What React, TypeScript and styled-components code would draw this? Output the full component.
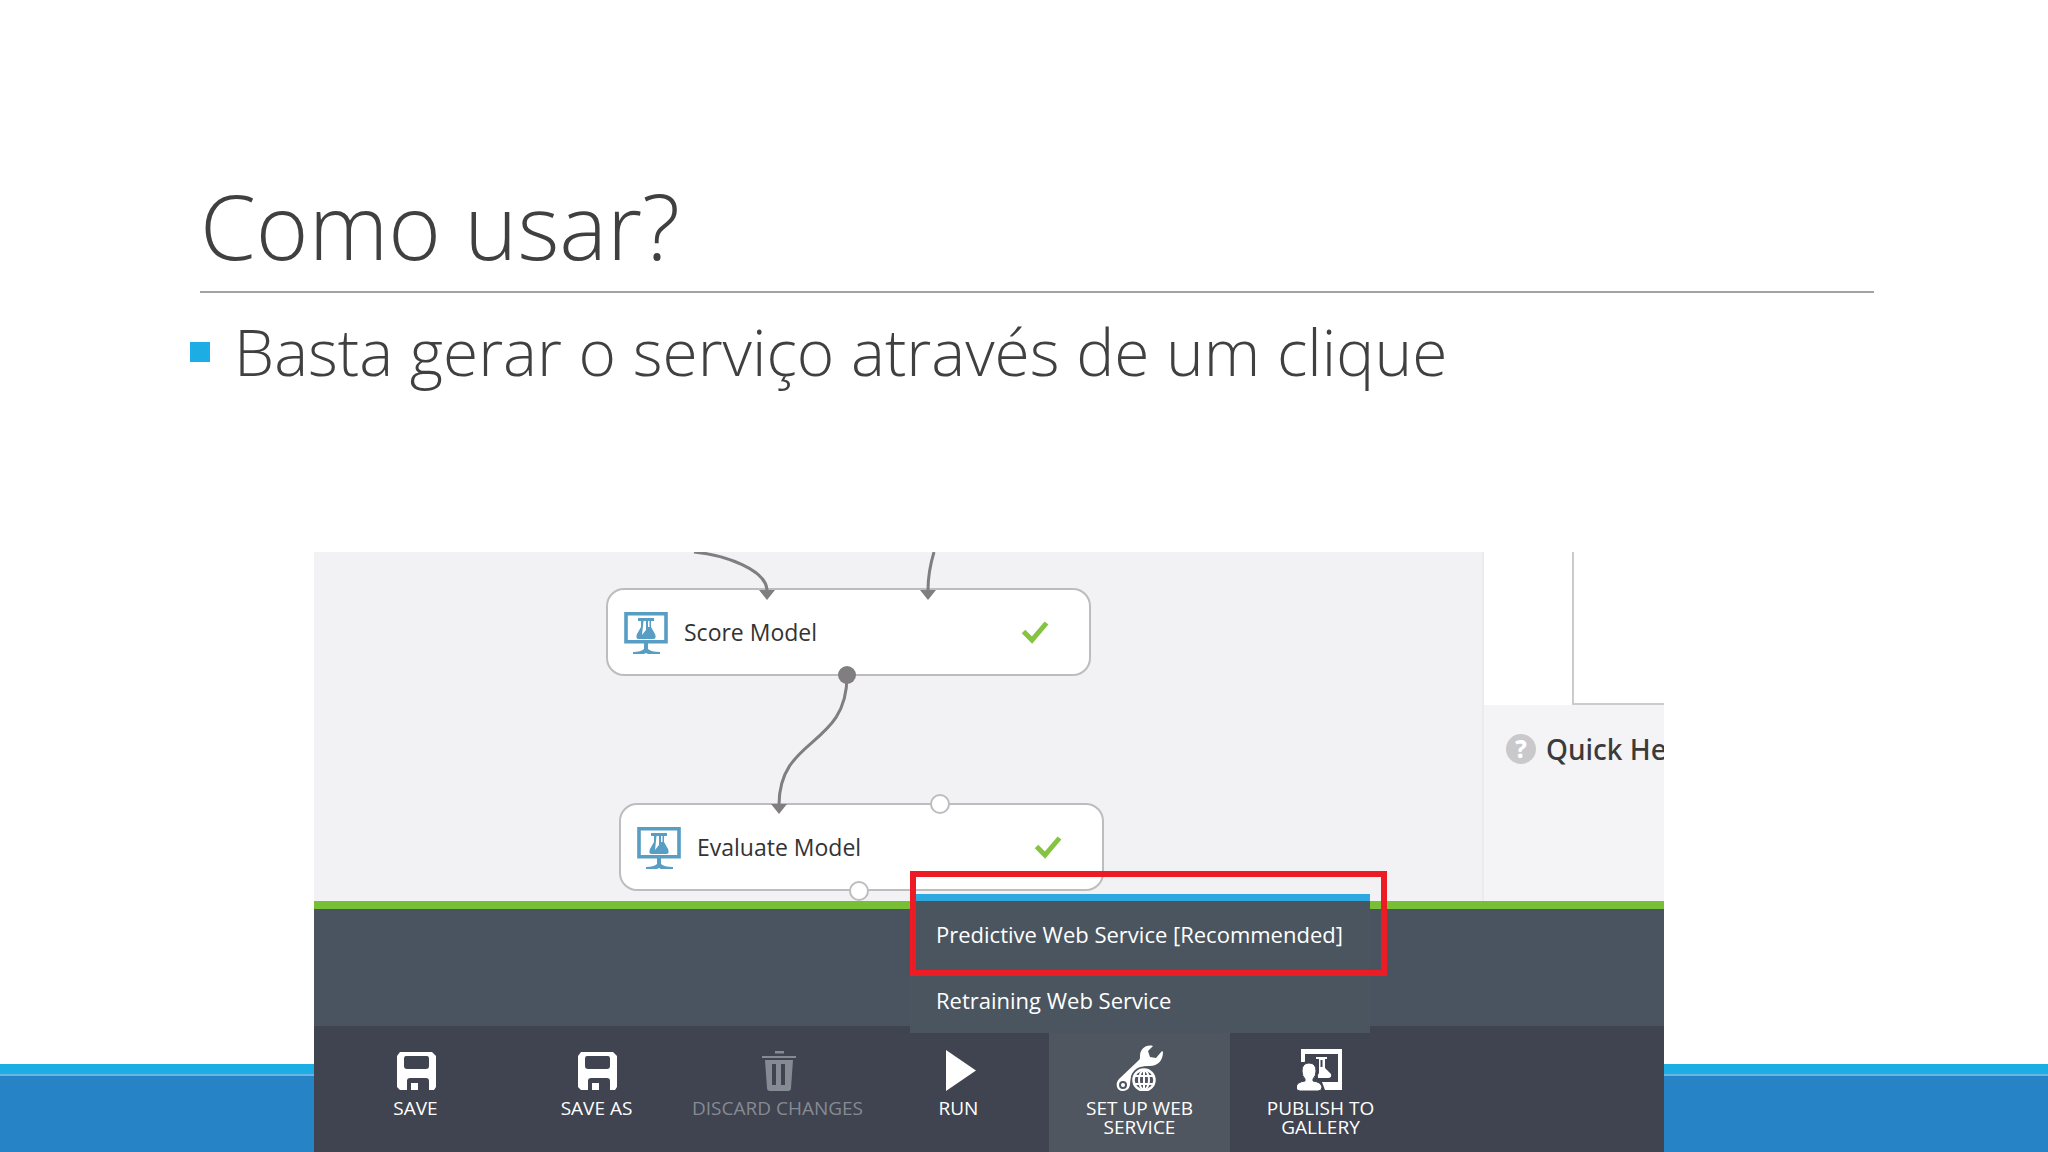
import React from "react";
import styled, { createGlobalStyle } from "styled-components";

const GlobalStyle = createGlobalStyle`
  *, *::before, *::after { box-sizing: border-box; }
  body { margin: 0; background: #fff; font-family: "Open Sans", "Noto Sans", sans-serif; }
  button { font: inherit; border: 0; margin: 0; padding: 0; background: none; color: inherit; cursor: pointer; }
`;

const Slide = styled.main`
  display: grid;
  min-height: 100vh;
  grid-template-columns: 314fr 1350fr 384fr;
  grid-template-rows: 1fr 512px 88px;
  overflow: hidden;
`;

const Heading = styled.header`
  grid-area: 1 / 1 / 2 / 4;
  padding: 165px 174px 0 190px;
  color: #404040;
`;

const Title = styled.h1`
  margin: 0 0 0 10px;
  height: 128px;
  border-bottom: 2px solid #a3a3a3;
  font-size: 90px;
  line-height: 120px;
  font-weight: 300;
`;

const Bullets = styled.ul`
  list-style: none;
  margin: 0;
  padding: 15px 0 0;
`;

const Bullet = styled.li`
  display: flex;
  align-items: center;
  gap: 24px;
  font-size: 64px;
  line-height: 88px;
  font-weight: 300;
  white-space: nowrap;
  &::before { content: ""; width: 20px; height: 20px; background: #1cade4; }
`;

const FooterBand = styled.footer`
  grid-area: 3 / 1 / 4 / 4;
  background: #2683c6;
  border-top: 10px solid #1cade4;
  box-shadow: inset 0 2px 0 #69b4e2;
`;

const Studio = styled.section`
  grid-area: 2 / 2 / 4 / 3;
  z-index: 1;
  display: flex;
  flex-direction: column;
  min-width: 0;
`;

const Workspace = styled.div`
  flex: 1;
  display: flex;
  min-height: 0;
  border-bottom: 8px solid #77bf34;
`;

const Canvas = styled.div`
  position: relative;
  flex: 1;
  background: #f2f1f3;
  border-right: 2px solid #ebeaec;
`;

const Edges = styled.svg`
  position: absolute;
  inset: 0;
  width: 100%;
  height: 100%;
  z-index: 1;
`;

const Node = styled.article<{ $x: number; $y: number }>`
  position: absolute;
  left: ${(p) => p.$x}px;
  top: ${(p) => p.$y}px;
  width: 485px;
  height: 88px;
  padding: 0 40px 0 16px;
  display: flex;
  align-items: center;
  gap: 16px;
  background: #fff;
  border: 2px solid #bdbcbe;
  border-radius: 18px;
  color: #333;
  font-size: 23px;
  line-height: 30px;
`;

const NodeName = styled.span`
  flex: 1;
`;

const Side = styled.aside`
  width: 180px;
  display: flex;
  flex-direction: column;
  background: #f4f3f5;
  overflow: hidden;
`;

const Preview = styled.div`
  height: 153px;
  padding-left: 88px;
  background: #fff;
  display: flex;
`;

const PreviewPane = styled.div`
  flex: 1;
  border-left: 2px solid #cbcacc;
  border-bottom: 2px solid #cbcacc;
`;

const QuickHelp = styled.h2`
  margin: 0;
  padding: 26px 0 0 22px;
  display: flex;
  align-items: center;
  gap: 10px;
  font-family: "Noto Sans", "Open Sans", sans-serif;
  font-size: 28px;
  line-height: 36px;
  font-weight: 500;
  color: #3b3b3b;
  white-space: nowrap;
`;

const HelpBadge = styled.span`
  flex: none;
  width: 30px;
  height: 30px;
  border-radius: 50%;
  background: #c9c8ca;
  color: #fff;
  font-size: 24px;
  line-height: 30px;
  font-weight: 800;
  text-align: center;
`;

const Band = styled.div`
  height: 117px;
  background: #4a5460;
`;

const Toolbar = styled.nav`
  position: relative;
  height: 126px;
  padding-left: 11px;
  display: flex;
  background: #3f4450;
  color: #fff;
`;

const Tool = styled.button<{ $active?: boolean }>`
  width: 181px;
  padding-top: 17px;
  display: flex;
  flex-direction: column;
  align-items: center;
  gap: 8px;
  background: ${(p) => (p.$active ? "#505660" : "none")};
  font-size: 19px;
  line-height: 19px;
  &:disabled { color: #868a93; }
  svg { flex: none; }
`;

const ToolLabel = styled.span`
  width: 116px;
  display: flex;
  justify-content: center;
  text-align: center;
  white-space: pre;
`;

const Menu = styled.div`
  position: absolute;
  left: 596px;
  bottom: 119px;
  width: 460px;
  height: 139px;
  border-top: 7px solid #2da9df;
  background: #4b5560;
  display: flex;
  flex-direction: column;
`;

const MenuItem = styled.button`
  flex: 1;
  padding: 0 26px;
  text-align: left;
  font-size: 22px;
  line-height: 30px;
  white-space: nowrap;
`;

const Highlight = styled.div`
  position: absolute;
  left: 0;
  top: -30px;
  width: 477px;
  height: 105px;
  border: 6px solid #ed1c24;
  pointer-events: none;
`;

const ModelIcon = () => (
  <svg width="44" height="48" viewBox="0 -4 44 48" aria-hidden="true">
    <path d="M2 1.800h40v28H2z" fill="#fff" stroke="#579dc4" strokeWidth="3.600" />
    <path d="M14 6h16v3h-3v6l4 7q2 5-2 5H15q-4 0-2-5l4-7V9h-3z" fill="#579dc4" />
    <path d="M19.500 9h2.500v9l-4 5zM24 9h1.500v6H24z" fill="#fff" />
    <path d="M20 31h4v7h-4z" fill="#579dc4" />
    <path d="M9 42v-2q8 0 11-3h4q3 3 12 3v2H24l-2-1-2 1z" fill="#579dc4" />
  </svg>
);

const CheckIcon = () => (
  <svg width="28" height="24" viewBox="0 0 28 24" aria-hidden="true">
    <path d="M2.500 11.500 11 20 25.500 3" fill="none" stroke="#84c440" strokeWidth="5" />
  </svg>
);

const SaveIcon = () => (
  <svg width="44" height="48" viewBox="0 0 44 48" aria-hidden="true">
    <path
      fillRule="evenodd"
      fill="currentColor"
      d="M6 9h32l4 4v31l-2 3h-5V38q0-3-3-3H16q-3 0-3 3v9H6l-3-3V13zM12 13q-2 0-2 3v7q0 3 3 3h19q3 0 3-3v-7q0-3-2-3zM17 40h7v7h-7z"
    />
  </svg>
);

const TrashIcon = () => (
  <svg width="44" height="48" viewBox="0 0 44 48" aria-hidden="true">
    <path d="M19 8h9v2.500h-9zM6 13h34v2H6z" fill="currentColor" />
    <path
      fillRule="evenodd"
      fill="currentColor"
      d="M9 17h28l-2 28q0 3-3 3H14q-3 0-3-3zM16 21v21h4V21zM25 21v21h4V21z"
    />
  </svg>
);

const RunIcon = () => (
  <svg width="44" height="48" viewBox="0 0 44 48" aria-hidden="true">
    <path d="M9 7 39 27.500 9 48z" fill="currentColor" />
  </svg>
);

const WebServiceIcon = () => (
  <svg width="52" height="48" viewBox="0 0 52 48" aria-hidden="true">
    <path
      fillRule="evenodd"
      fill="currentColor"
      d="M39 3c-7-2-13 3-13 10 0 2 0 3-1 4L5 36c-4 4-3 12 4 12 5 0 7-4 7-7 1-10 9-18 18-18 9 1 15-5 15-14l-1-1-6 7-6-1-2-6zM9 38a4 4 0 1 1 0 8 4 4 0 0 1 0-8z"
    />
    <circle cx="9" cy="42" r="2" fill="currentColor" />
    <circle cx="30" cy="37" r="13.500" fill="#505660" />
    <g fill="none" stroke="currentColor">
      <circle cx="30" cy="37" r="10.500" strokeWidth="2.500" />
      <ellipse cx="30" cy="37" rx="5" ry="9.500" strokeWidth="2" />
      <path d="M30 27v20M21 33h18M21 41h18" strokeWidth="2" />
    </g>
  </svg>
);

const GalleryIcon = () => (
  <svg width="48" height="48" viewBox="0 0 48 48" aria-hidden="true">
    <path d="M4 6h41v41H28l-3-8h16V11H8v8H4z" fill="currentColor" />
    <path d="M19 14h11v2h-2v9l6 6q1 4-3 4H21q-1-3 1-5v-14h-3zM23.500 17v7h2v-7z" fill="currentColor" />
    <circle cx="12" cy="27" r="9.500" fill="#3f4450" />
    <path
      d="M12 20q7 0 7 8 0 5-3 8v2q8 1 9 6 0 4-4 4H3q-4 0-4-4 1-5 9-6v-2q-3-3-3-8 0-8 7-8z"
      fill="currentColor"
      stroke="#3f4450"
    />
  </svg>
);

const tools = [
  { label: "SAVE", icon: <SaveIcon /> },
  { label: "SAVE AS", icon: <SaveIcon /> },
  { label: "DISCARD CHANGES", icon: <TrashIcon />, disabled: true },
  { label: "RUN", icon: <RunIcon /> },
  { label: "SET UP WEB\nSERVICE", icon: <WebServiceIcon />, active: true },
  { label: "PUBLISH TO\nGALLERY", icon: <GalleryIcon /> },
];

export default function App() {
  return (
    <>
      <GlobalStyle />
      <Slide>
        <Heading>
          <Title>Como usar?</Title>
          <Bullets>
            <Bullet>Basta gerar o serviço através de um clique</Bullet>
          </Bullets>
        </Heading>
        <FooterBand />
        <Studio>
          <Workspace>
            <Canvas>
              <Node $x={292} $y={36}>
                <ModelIcon />
                <NodeName>Score Model</NodeName>
                <CheckIcon />
              </Node>
              <Node $x={305} $y={251}>
                <ModelIcon />
                <NodeName>Evaluate Model</NodeName>
                <CheckIcon />
              </Node>
              <Edges aria-hidden="true">
                <g fill="none" stroke="#807e81" strokeWidth="3">
                  <path d="M380 0C412 3 452 18 453 38" />
                  <path d="M620 0Q614 20 614 38" />
                  <path d="M533 124C533 196 465 184 465 253" />
                </g>
                <path d="M445 38h16l-8 10zM606 38h16l-8 10zM457 252h16l-8 10z" fill="#807e81" />
                <circle cx="533" cy="123" r="9" fill="#807e81" />
                <g fill="#fff" stroke="#bdbcbe" strokeWidth="2">
                  <circle cx="626" cy="252" r="9" />
                  <circle cx="545" cy="339" r="9" />
                </g>
              </Edges>
            </Canvas>
            <Side>
              <Preview>
                <PreviewPane />
              </Preview>
              <QuickHelp>
                <HelpBadge>?</HelpBadge>
                Quick He
              </QuickHelp>
            </Side>
          </Workspace>
          <Band />
          <Toolbar>
            {tools.map((t) => (
              <Tool key={t.label} $active={t.active} disabled={t.disabled}>
                {t.icon}
                <ToolLabel>{t.label}</ToolLabel>
              </Tool>
            ))}
            <Menu>
              <MenuItem>Predictive Web Service [Recommended]</MenuItem>
              <MenuItem>Retraining Web Service</MenuItem>
              <Highlight />
            </Menu>
          </Toolbar>
        </Studio>
      </Slide>
    </>
  );
}
